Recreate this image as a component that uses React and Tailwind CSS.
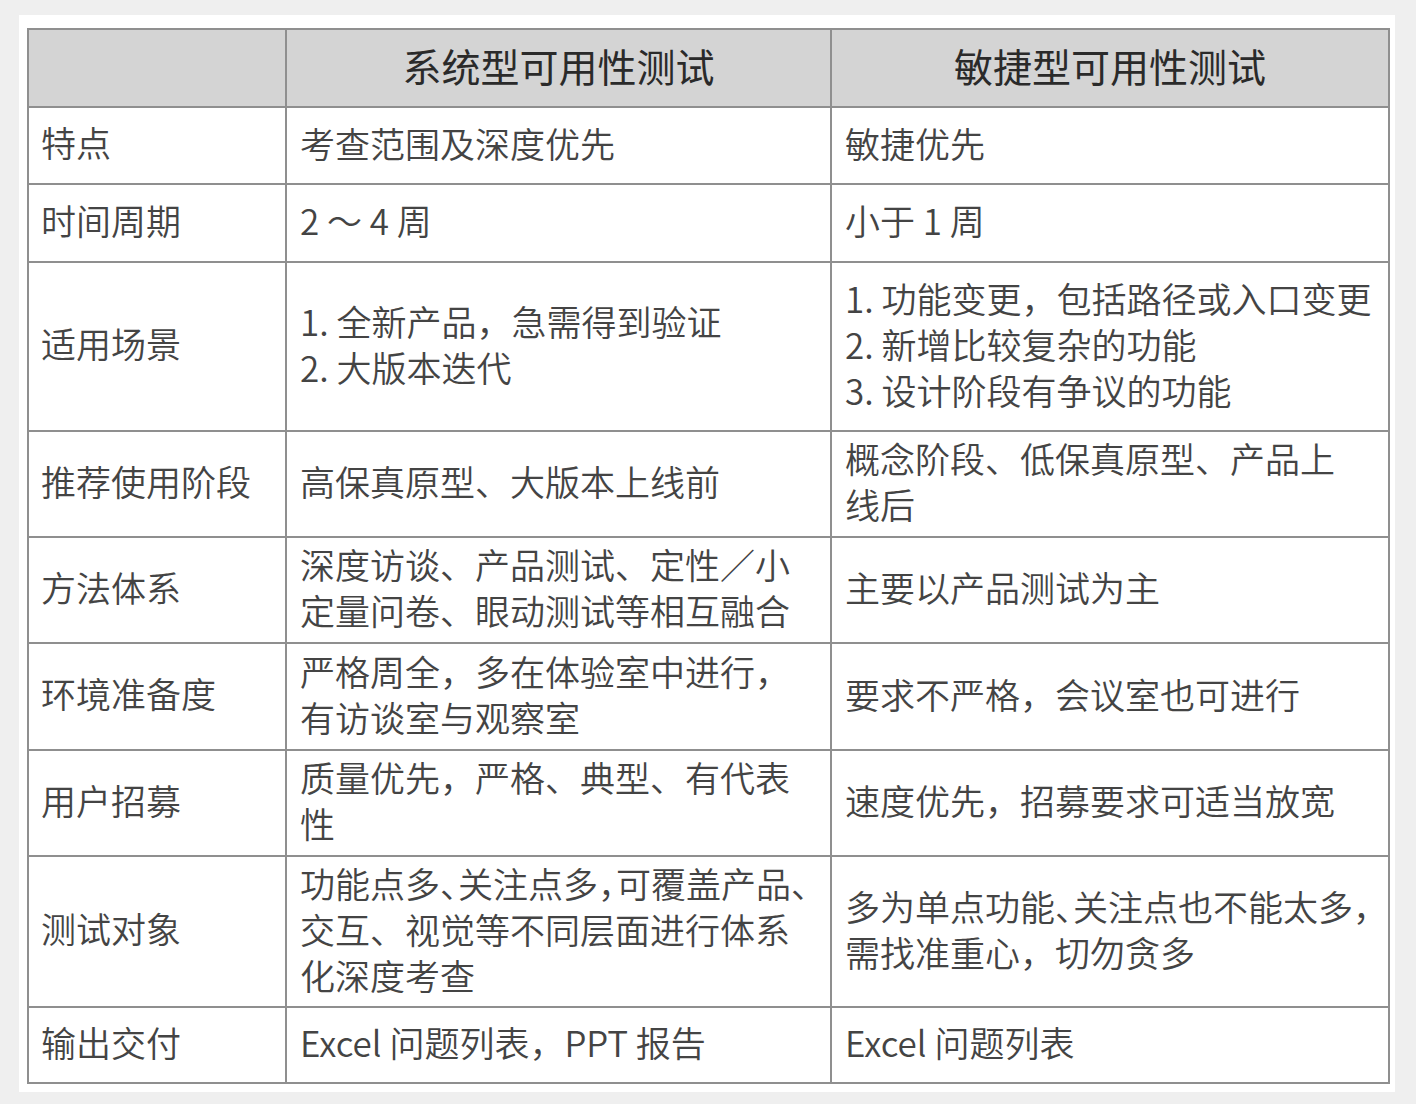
import React from "react";

const rows = [
  { label: "特点", a: ["考查范围及深度优先"], b: ["敏捷优先"], h: "h-[77px]" },
  { label: "时间周期", a: ["2 ～ 4 周"], b: ["小于 1 周"], h: "h-[78px]" },
  {
    label: "适用场景",
    a: ["1. 全新产品，急需得到验证", "2. 大版本迭代"],
    b: ["1. 功能变更，包括路径或入口变更", "2. 新增比较复杂的功能", "3. 设计阶段有争议的功能"],
    h: "h-[169px]",
  },
  {
    label: "推荐使用阶段",
    a: ["高保真原型、大版本上线前"],
    b: ["概念阶段、低保真原型、产品上", "线后"],
    h: "h-[106px]",
  },
  {
    label: "方法体系",
    a: ["深度访谈、产品测试、定性／小", "定量问卷、眼动测试等相互融合"],
    b: ["主要以产品测试为主"],
    h: "h-[106px]",
  },
  {
    label: "环境准备度",
    a: ["严格周全，多在体验室中进行，", "有访谈室与观察室"],
    b: ["要求不严格，会议室也可进行"],
    h: "h-[107px]",
  },
  {
    label: "用户招募",
    a: ["质量优先，严格、典型、有代表", "性"],
    b: ["速度优先，招募要求可适当放宽"],
    h: "h-[106px]",
  },
  {
    label: "测试对象",
    a: [
      <>
        功能点多<span className="tracking-[-17px]">、</span>关注点多<span className="tracking-[-17px]">，</span>可覆盖产品、
      </>,
      "交互、视觉等不同层面进行体系",
      "化深度考查",
    ],
    b: [
      <>
        多为单点功能<span className="tracking-[-17px]">、</span>关注点也不能太多，
      </>,
      "需找准重心，切勿贪多",
    ],
    h: "h-[151px]",
  },
  { label: "输出交付", a: ["Excel 问题列表，PPT 报告"], b: ["Excel 问题列表"], h: "h-[76px]" },
];

function Cell({ lines, h }) {
  return (
    <div className={`${h} border-r-2 border-b-2 border-[#8f8f8f] flex flex-col justify-center pl-[13px] pb-[6px]`}>
      {lines.map((l, i) => (
        <div key={i} className="whitespace-nowrap leading-[46px]">
          {l}
        </div>
      ))}
    </div>
  );
}

export default function App() {
  return (
    <div
      className="min-h-[1104px] bg-[#efefef] pt-[15px] pl-[19px]"
      style={{ fontFamily: '"Noto Sans CJK SC", "Noto Sans", sans-serif' }}
    >
      <div className="w-[1376px] h-[1077px] bg-white pt-[13px] pl-[8px]">
        <div className="w-[1363px] grid grid-cols-[258px_545px_558px] border-l-2 border-t-2 border-[#8f8f8f] text-[35px] font-[350] text-[#444444]">
          {/* header */}
          <div className="h-[78px] bg-[#d4d4d4] border-r-2 border-b-2 border-[#8f8f8f]"></div>
          <div className="h-[78px] bg-[#d4d4d4] border-r-2 border-b-2 border-[#8f8f8f] flex items-center justify-center pb-[6px] text-[39px] font-normal text-[#2a2a2a]">
            系统型可用性测试
          </div>
          <div className="h-[78px] bg-[#d4d4d4] border-r-2 border-b-2 border-[#8f8f8f] flex items-center justify-center pb-[6px] text-[39px] font-normal text-[#2a2a2a]">
            敏捷型可用性测试
          </div>

          {rows.map((r) => (
            <React.Fragment key={r.label}>
              <div className={`${r.h} border-r-2 border-b-2 border-[#8f8f8f] flex items-center pl-[12px] pb-[6px] whitespace-nowrap`}>
                {r.label}
              </div>
              <Cell lines={r.a} h={r.h} />
              <Cell lines={r.b} h={r.h} />
            </React.Fragment>
          ))}
        </div>
      </div>
    </div>
  );
}
